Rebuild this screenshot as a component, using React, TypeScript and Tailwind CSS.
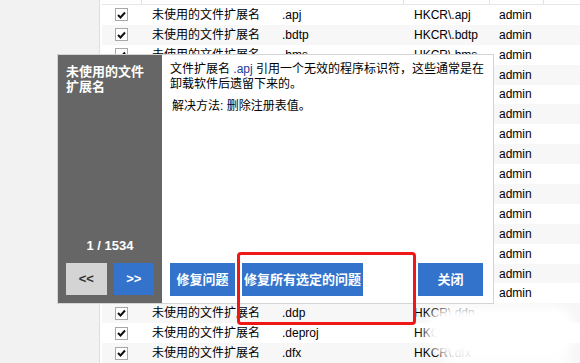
import React from "react";

const exts = [
  ".apj", ".bdtp", ".bms", ".bpr", ".cab1", ".cdx", ".cfm", ".chk", ".cpx", ".csk",
  ".dat1", ".dbk", ".dcr", ".dcx", ".ddf", ".ddp", ".deproj", ".dfx",
];

function Check() {
  return (
    <span className="flex h-[13px] w-[13px] items-center justify-center border border-[#a8a8a8] bg-white">
      <svg width="9" height="8" viewBox="0 0 9 8">
        <path d="M1 4 L3.5 6.5 L8 1.5" fill="none" stroke="#111" strokeWidth="2" />
      </svg>
    </span>
  );
}

// rows 3..14 sit under the dialog: only the admin column shows
function Row({ ext, i }: { ext: string; i: number }) {
  const covered = i >= 3 && i <= 14;
  return (
    <div
      className={`grid h-5 grid-cols-[40px_132px_130px_86px_54px] items-center text-[12px] leading-[14px] text-black ${
        i % 2 === 1 ? "bg-[#f7f7f7]" : "bg-white"
      }`}
    >
      <div className="flex justify-center pr-[1px]">{!covered && <Check />}</div>
      <div className="pl-[10px] whitespace-nowrap">{!covered && "未使用的文件扩展名"}</div>
      <div className="pl-[8px]">{!covered && ext}</div>
      <div className="pl-[10px] whitespace-nowrap">{!covered && `HKCR\\${ext}`}</div>
      <div className="pl-[9px]">{i < 15 && "admin"}</div>
    </div>
  );
}

export default function App() {
  return (
    <div className="relative flex h-[363px] w-[580px] overflow-hidden bg-white font-['Liberation_Sans','Noto_Sans_CJK_SC',sans-serif]">
      {/* left backdrop */}
      <div className="w-[100px] border-r border-[#dedede] bg-[#f2f2f2]" />

      {/* table */}
      <div className="flex flex-1 flex-col pl-[2px]">
        <div className="grid h-[5px] grid-cols-[40px_132px_130px_86px_54px] border-b border-[#e6e6e6]">
          <div className="border-r border-[#e2e2e2]" />
          <div />
          <div className="border-r border-[#e2e2e2]" />
          <div className="border-r border-[#e2e2e2]" />
          <div className="border-r border-[#e2e2e2]" />
        </div>
        {exts.map((e, i) => (
          <Row key={e} ext={e} i={i} />
        ))}
      </div>

      {/* watermark fade */}
      <div className="absolute left-[426px] top-[307px] h-[48px] w-[150px] rounded-full bg-white blur-[5px]" />
      <div className="absolute left-[445px] top-[342px] h-[30px] w-[125px] rounded-full bg-white/80 blur-[6px]" />

      {/* dialog */}
      <div className="absolute left-[57px] top-[54px] flex h-[250px] w-[437px] border border-[#d4d4d4] bg-white">
        <div className="flex w-[104px] flex-col bg-[#666666] px-[8px] pb-[8px] pt-[9px] text-white">
          <div className="text-[13px] font-bold leading-[15px]">未使用的文件扩展名</div>
          <div className="mt-auto mb-[10px] text-center text-[13px] font-bold leading-[15px]">1 / 1534</div>
          <div className="flex gap-[7px]">
            <button className="h-[32px] w-[41px] bg-[#d4d4d4] text-[13px] font-bold text-[#333]">&lt;&lt;</button>
            <button className="h-[32px] w-[41px] bg-[#3373cc] text-[13px] font-bold text-white">&gt;&gt;</button>
          </div>
        </div>
        <div className="flex flex-1 flex-col pl-[8px] pr-[10px] pb-[7px] pt-[7px] text-[12px] leading-[15px] text-black">
          <p className="-mr-[8px]">
            文件扩展名 <span className="text-[#1d3a94]">.apj</span> 引用一个无效的程序标识符，这些通常是在卸载软件后遗留下来的。
          </p>
          <p className="mt-[7px] pl-[2px]">解决方法: 删除注册表值。</p>
          <div className="mt-auto flex gap-[7px] text-[13px] font-bold text-white">
            <button className="h-[33px] w-[65px] bg-[#3373cc]">修复问题</button>
            <button className="h-[33px] w-[121px] whitespace-nowrap bg-[#3373cc]">修复所有选定的问题</button>
            <button className="ml-auto h-[33px] w-[65px] bg-[#3373cc]">关闭</button>
          </div>
        </div>
      </div>

      {/* highlight box */}
      <div className="absolute left-[237px] top-[252px] h-[73px] w-[179px] rounded-[4px] border-[3px] border-[#f01717]" />
    </div>
  );
}
